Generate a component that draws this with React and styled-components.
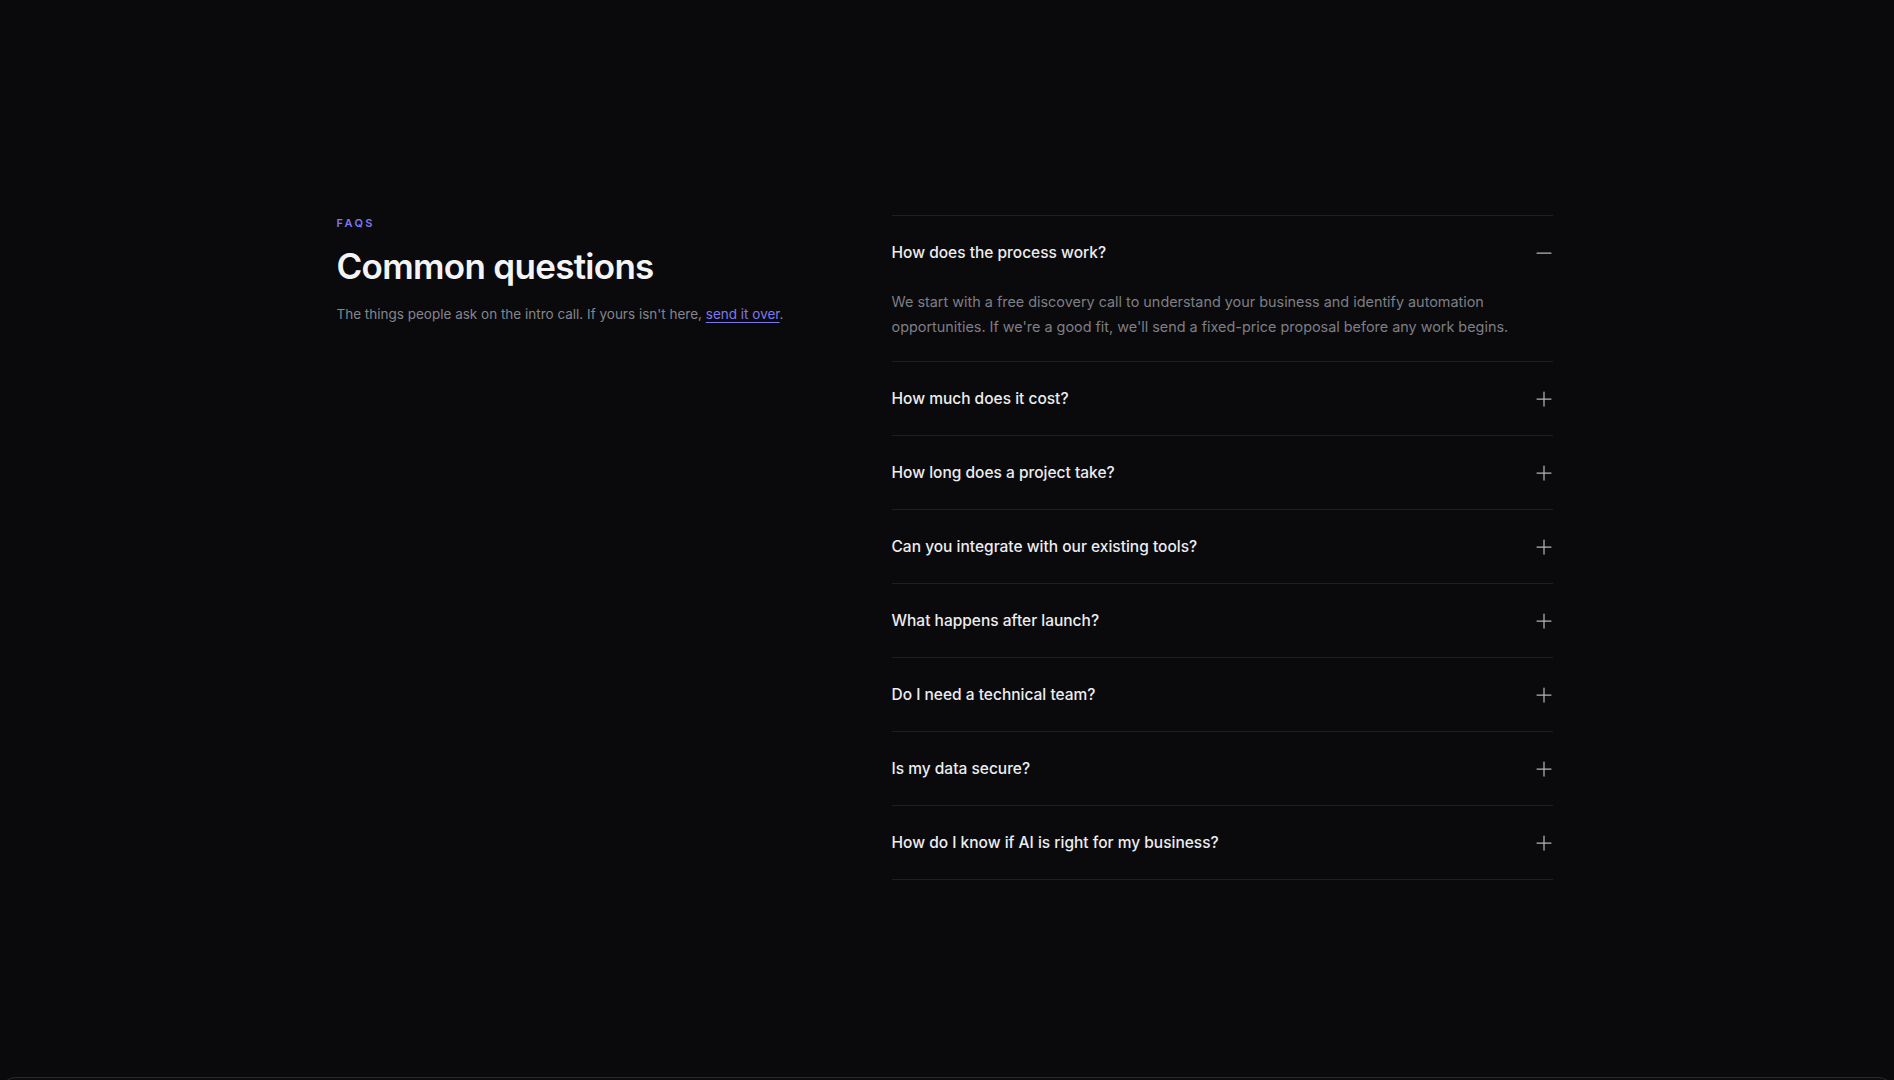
import React, { useState } from 'react';
import styled, { createGlobalStyle } from 'styled-components';
import { Plus, Minus } from 'lucide-react';

const faqs = [
	{
		q: 'How does the process work?',
		a: "We start with a free discovery call to understand your business and identify automation opportunities. If we're a good fit, we'll send a fixed-price proposal before any work begins.",
	},
	{ q: 'How much does it cost?', a: '' },
	{ q: 'How long does a project take?', a: '' },
	{ q: 'Can you integrate with our existing tools?', a: '' },
	{ q: 'What happens after launch?', a: '' },
	{ q: 'Do I need a technical team?', a: '' },
	{ q: 'Is my data secure?', a: '' },
	{ q: 'How do I know if AI is right for my business?', a: '' },
];

function App() {
	const [open, setOpen] = useState(0);

	return (
		<>
			<GlobalStyle />
			<Section>
				<Container>
					<Intro>
						<Eyebrow>FAQs</Eyebrow>
						<Title>Common questions</Title>
						<Lead>
							The things people ask on the intro call. If yours isn't here,{' '}
							<a href="#contact">send it over</a>.
						</Lead>
					</Intro>
					<List>
						{faqs.map((item, i) => (
							<Item key={item.q}>
								<Question onClick={() => setOpen(open === i ? -1 : i)}>
									<span>{item.q}</span>
									{open === i ? (
										<Minus size={24} strokeWidth={1.25} />
									) : (
										<Plus size={24} strokeWidth={1.25} />
									)}
								</Question>
								{open === i && item.a && <Answer>{item.a}</Answer>}
							</Item>
						))}
					</List>
				</Container>
			</Section>
			<NextSection />
		</>
	);
}

const GlobalStyle = createGlobalStyle`
	* {
		box-sizing: border-box;
	}

	body {
		margin: 0;
		background: #0a0a0c;
		color: #ededf0;
		font-family: Inter, "Noto Sans", sans-serif;
		-webkit-font-smoothing: antialiased;
	}
`;

const Section = styled.section`
	height: 1077px;
	padding: 215px 5px 0 0;
`;

const Container = styled.div`
	max-width: 1216px;
	margin: 0 auto;
	display: grid;
	grid-template-columns: 1fr 661px;
	gap: 64px;
	align-items: start;
`;

const Intro = styled.div`
	padding-top: 1px;
`;

const Eyebrow = styled.div`
	font-size: 11px;
	line-height: 14px;
	font-weight: 600;
	letter-spacing: 0.22em;
	text-transform: uppercase;
	color: #7f78ec;
`;

const Title = styled.h2`
	margin: 16px 0 0;
	font-size: 35px;
	line-height: 40px;
	font-weight: 600;
	letter-spacing: -0.02em;
	color: #f4f4f6;
`;

const Lead = styled.p`
	margin: 17px 0 0;
	font-size: 13.5px;
	line-height: 22px;
	color: #85858c;

	a {
		color: #7f78ec;
		text-decoration: underline;
		text-underline-offset: 3px;
		text-decoration-thickness: 1px;
	}
`;

const List = styled.div`
	border-top: 1px solid #1f1f23;
`;

const Item = styled.div`
	border-bottom: 1px solid #1f1f23;
`;

const Question = styled.button`
	width: 100%;
	display: flex;
	align-items: center;
	justify-content: space-between;
	padding: 24px 0;
	background: none;
	border: 0;
	cursor: pointer;
	font-family: inherit;
	font-size: 15.5px;
	line-height: 25px;
	font-weight: 500;
	color: #ededf0;
	text-align: left;

	svg {
		color: #b4b4b8;
		margin: -4px -3px -4px 0;
		flex-shrink: 0;
	}
`;

const Answer = styled.p`
	margin: 0;
	padding: 0 40px 22px 0;
	font-size: 14.4px;
	line-height: 25px;
	color: #7e7e85;
`;

const NextSection = styled.div`
	height: 40px;
	border: 1px solid #2a2a2e;
	border-bottom: 0;
	border-radius: 16px 16px 0 0;
	background: #0c0c0e;
`;

export default App;
